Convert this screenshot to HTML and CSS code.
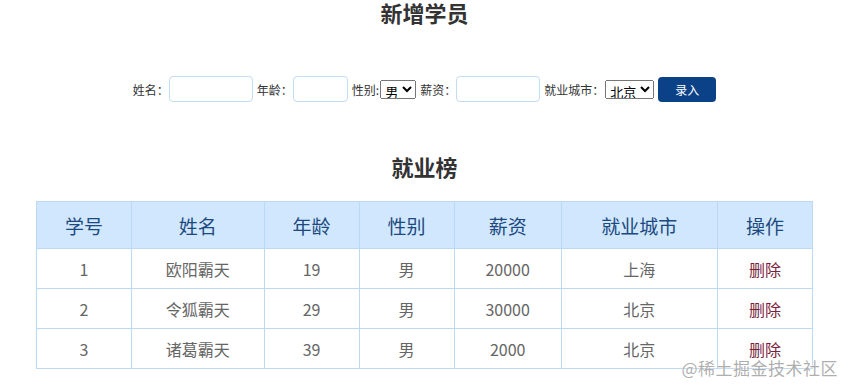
FILE: index.html
```html
<!DOCTYPE html>
<html lang="zh-CN">
<head>
    <meta charset="UTF-8">
    <meta name="viewport" content="width=device-width, initial-scale=1.0">
    <title>学员就业榜</title>
    <link rel="stylesheet" href="styles.css">
</head>
<body>
    <h2 class="title">新增学员</h2>
    <div class="info">
        <span>姓名：</span><input type="text" class="ipt ipt-name">
        <span>年龄：</span><input type="text" class="ipt ipt-age">
        <span>性别:</span><select class="sel"><option>男</option><option>女</option></select>
        <span>薪资：</span><input type="text" class="ipt ipt-salary">
        <span>就业城市：</span><select class="sel"><option>北京</option><option>上海</option></select>
        <button class="add">录入</button>
    </div>

    <h2 class="title rank">就业榜</h2>
    <table class="list">
        <thead>
            <tr>
                <th class="c1">学号</th>
                <th class="c2">姓名</th>
                <th class="c3">年龄</th>
                <th class="c4">性别</th>
                <th class="c5">薪资</th>
                <th class="c6">就业城市</th>
                <th class="c7">操作</th>
            </tr>
        </thead>
        <tbody>
            <tr><td>1</td><td>欧阳霸天</td><td>19</td><td>男</td><td>20000</td><td>上海</td><td><a href="#" class="del">删除</a></td></tr>
            <tr><td>2</td><td>令狐霸天</td><td>29</td><td>男</td><td>30000</td><td>北京</td><td><a href="#" class="del">删除</a></td></tr>
            <tr><td>3</td><td>诸葛霸天</td><td>39</td><td>男</td><td>2000</td><td>北京</td><td><a href="#" class="del">删除</a></td></tr>
        </tbody>
    </table>

    <div class="mark">@稀土掘金技术社区</div>
</body>
</html>
```

FILE: styles.css
```css
body {
    margin: 0;
    padding-right: 4px;
    font-family: "Noto Sans CJK SC", "Microsoft YaHei", sans-serif;
    color: #333;
}
.title {
    margin: 0;
    font-size: 22px;
    line-height: 22px;
    padding-top: 1px;
    text-align: center;
    color: #333;
}
.info {
    margin-top: 53px;
    display: flex;
    justify-content: center;
    align-items: center;
    font-size: 12px;
    color: #333;
}
.info span {
    margin-left: 4px;
}
.info span:first-child {
    margin-left: 0;
}
.ipt {
    height: 26px;
    box-sizing: border-box;
    border: 1px solid #c2dcf3;
    border-radius: 4px;
    outline: none;
    padding: 0 6px;
}
.ipt-name, .ipt-salary {
    width: 84px;
}
.ipt-age {
    width: 55px;
}
.sel {
    font-size: 13px;
    height: 19px;
    padding: 0;
    margin-left: 1px;
    font-family: "Noto Sans CJK SC", sans-serif;
}
.add {
    width: 58px;
    height: 25px;
    margin-left: 4px;
    border: none;
    border-radius: 4px;
    background-color: #0b4187;
    color: #fff;
    font-size: 12px;
    font-family: "Noto Sans CJK SC", sans-serif;
}
.rank {
    margin-top: 52px;
}
.list {
    width: 777px;
    margin: 24px auto 0;
    border-collapse: collapse;
    text-align: center;
}
.list th, .list td {
    border: 1px solid #bcd9f3;
    padding: 0;
}
.list th {
    height: 46px;
    background-color: #d1e7fd;
    font-weight: normal;
    font-size: 19px;
    color: #1c4a80;
}
.list td {
    height: 39px;
    font-size: 16px;
    color: #666;
}
.c1, .c3, .c4, .c7 {
    width: 95px;
}
.c2 {
    width: 133px;
}
.c5 {
    width: 107px;
}
.c6 {
    width: 157px;
}
.del {
    color: #7a1f3d;
    text-decoration: none;
}
.mark {
    position: absolute;
    right: 15px;
    top: 355px;
    font-size: 17px;
    color: rgba(160, 160, 160, 0.85);
    text-shadow: 0 0 2px #fff;
    letter-spacing: 0.5px;
}
```
